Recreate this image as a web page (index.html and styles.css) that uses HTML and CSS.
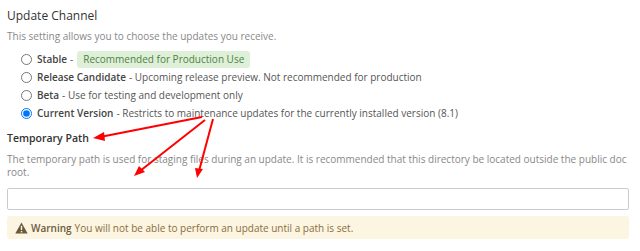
FILE: index.html
```html
<!DOCTYPE html>
<html lang="en">
<head>
    <meta charset="UTF-8">
    <title>Update Settings</title>
    <link rel="stylesheet" href="styles.css">
</head>
<body>
    <div class="settings">
        <!-- Update channel -->
        <div class="field">
            <h3 class="field-title">Update Channel</h3>
            <p class="field-help first">This setting allows you to choose the updates you receive.</p>
            <div class="radio-list">
                <label class="radio-row"><input type="radio" name="channel"><b>Stable</b> - <span class="badge">Recommended for Production Use</span></label>
                <label class="radio-row"><input type="radio" name="channel"><b>Release Candidate</b> - Upcoming release preview. Not recommended for production</label>
                <label class="radio-row"><input type="radio" name="channel"><b>Beta</b> - Use for testing and development only</label>
                <label class="radio-row"><input type="radio" name="channel" checked><b>Current Version</b> - Restricts to maintenance updates for the currently installed version (8.1)</label>
            </div>
        </div>

        <!-- Temporary path -->
        <div class="field">
            <h3 class="field-title strong">Temporary Path</h3>
            <p class="field-help">The temporary path is used for staging files during an update. It is recommended that this directory be located outside the public doc root.</p>
            <input type="text" class="text-input">
            <div class="alert">
                <svg class="alert-icon" width="13" height="12" viewBox="0 0 13 12"><path d="M6.5 0.5 L12.7 11.5 L0.3 11.5 Z" fill="#6b5a3a"/><rect x="5.8" y="3.8" width="1.4" height="4.2" fill="#fcf5e2"/><rect x="5.8" y="9" width="1.4" height="1.4" fill="#fcf5e2"/></svg>
                <b>Warning</b> You will not be able to perform an update until a path is set.
            </div>
        </div>

        <!-- annotation arrows -->
        <svg class="arrows" width="640" height="251" viewBox="0 0 640 251">
            <g stroke="#f00" stroke-width="2" fill="none">
                <line x1="202" y1="117" x2="100" y2="137"/>
                <line x1="205" y1="120" x2="140" y2="171"/>
                <line x1="213" y1="119" x2="199" y2="171"/>
            </g>
            <g fill="#f00">
                <polygon points="93,138 104,132 105,141"/>
                <polygon points="134,176 139,166 145,172"/>
                <polygon points="197,178 195,168 203,169"/>
            </g>
        </svg>
    </div>
</body>
</html>
```

FILE: styles.css
```css
body {
    margin: 0;
    font-family: "Open Sans", Arial, sans-serif;
    font-size: 10px;
    color: #555;
    background-color: #fff;
}

.settings {
    position: relative;
    padding: 7px 11px 0 7px;
}

.field-title {
    margin: 0;
    font-size: 12px;
    font-weight: 400;
    line-height: 17px;
    color: #333;
}

.field-title.strong {
    font-size: 10.5px;
    font-weight: 600;
}

.field-help {
    margin: 6px 0 4px;
    line-height: 13px;
    color: #888;
}

.field-help.first {
    margin-bottom: 7px;
}

.radio-list {
    display: flex;
    flex-direction: column;
    padding-left: 14px;
}

.radio-row {
    display: flex;
    align-items: center;
    height: 18px;
    white-space: nowrap;
    color: #555;
}

.radio-row b {
    font-weight: 600;
    color: #444;
    margin-right: 3px;
}

.radio-row input {
    margin: 0 5px 0 0;
    width: 11px;
    height: 11px;
}

.badge {
    display: inline-block;
    margin-left: 4px;
    padding: 2px 6px;
    background-color: #dff0d8;
    color: #4f8047;
    border-radius: 3px;
    line-height: 13px;
}

.field + .field {
    margin-top: 8px;
}

.text-input {
    display: block;
    box-sizing: border-box;
    width: 100%;
    height: 22px;
    margin-top: 9px;
    border: 1px solid #ccc;
    border-radius: 2px;
}

.alert {
    display: flex;
    align-items: center;
    gap: 3px;
    margin-top: 6px;
    height: 23px;
    padding: 0 8px;
    box-sizing: border-box;
    background-color: #fcf5e2;
    border-radius: 3px;
    color: #8a6d3b;
}

.alert b {
    font-weight: 600;
    color: #6b5a3a;
}

.arrows {
    position: absolute;
    top: 0;
    left: 0;
    pointer-events: none;
}
```
